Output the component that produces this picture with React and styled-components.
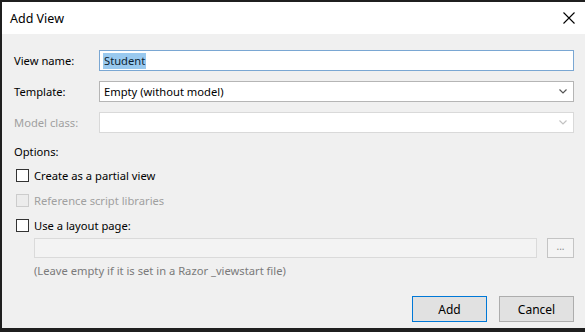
import React from 'react'
import styled, { createGlobalStyle } from 'styled-components'

const FONT = `"Noto Sans", "Segoe UI", "Liberation Sans", sans-serif`

const GlobalStyle = createGlobalStyle`
  html, body {
    margin: 0;
    padding: 0;
    background: #1c1c1c;
  }
  body {
    font-family: ${FONT};
    font-size: 11.2px;
  }
`

const Screen = styled.div`
  width: 585px;
  height: 332px;
  box-sizing: border-box;
  padding: 2px 0 4px 2px;
  display: flex;
  background: #1f1f1f;
`

const Dialog = styled.div`
  flex: 1;
  display: flex;
  flex-direction: column;
  background: #f0f0f0;
  font-family: ${FONT};
  font-size: 11.2px;
  color: #000;
`

const TitleBar = styled.div`
  height: 32px;
  flex: none;
  display: flex;
  align-items: center;
  justify-content: space-between;
  background: #fff;
  padding: 0 9px 0 8px;
`

const Title = styled.span`
  font-size: 12.5px;
  color: #000;
`

const CloseButton = styled.button`
  width: 14px;
  height: 14px;
  padding: 0;
  border: 0;
  background: transparent;
  display: flex;
  align-items: center;
  justify-content: center;
`

const Body = styled.div`
  flex: 1;
  display: flex;
  flex-direction: column;
  padding: 16px 11px 6px 12px;
`

const FieldGrid = styled.div`
  display: grid;
  grid-template-columns: 85px 1fr;
  row-gap: 10px;
  align-items: center;
`

const Label = styled.label`
  color: ${p => (p.$disabled ? '#a0a0a0' : '#000')};
  line-height: 16px;
`

const TextBox = styled.div`
  height: 21px;
  box-sizing: border-box;
  border: 1px solid ${p => (p.$focused ? '#7aa7d3' : '#c9c9c9')};
  background: #fff;
  display: flex;
  align-items: center;
  padding: 0 3px;
`

const Selected = styled.span`
  background: #99c9ef;
  color: #0c1f33;
  line-height: 16px;
  padding: 0 1px;
`

const Select = styled.div`
  height: 21px;
  box-sizing: border-box;
  border: 1px solid ${p => (p.$disabled ? '#d9d9d9' : '#b5b5b5')};
  background: #fff;
  display: flex;
  align-items: center;
  justify-content: space-between;
  padding: 0 6px 0 4px;
  color: #000;
`

const Section = styled.div`
  margin: 11px 0 3px;
  line-height: 16px;
`

const CheckRow = styled.label`
  display: flex;
  align-items: center;
  gap: 5px;
  height: 25px;
  padding-left: 2px;
  color: ${p => (p.$disabled ? '#a0a0a0' : '#000')};
`

const Box = styled.span`
  width: 13px;
  height: 13px;
  box-sizing: border-box;
  border: 1px solid ${p => (p.$disabled ? '#cccccc' : '#333')};
  background: ${p => (p.$disabled ? '#ececec' : '#fff')};
`

const LayoutRow = styled.div`
  display: flex;
  align-items: center;
  gap: 10px;
  padding-left: 20px;
`

const LayoutInput = styled.div`
  flex: 1;
  height: 20px;
  box-sizing: border-box;
  border: 1px solid #dadada;
  background: #f3f3f3;
`

const BrowseButton = styled.button`
  width: 27px;
  height: 20px;
  box-sizing: border-box;
  border: 1px solid #c4c4c4;
  background: #f4f4f4;
  color: #8a8a8a;
  font-family: ${FONT};
  font-size: 10px;
  padding: 0 0 4px;
  line-height: 1;
`

const Hint = styled.div`
  padding-left: 20px;
  margin-top: 5px;
  color: #7a7a7a;
  line-height: 16px;
`

const Buttons = styled.div`
  margin-top: auto;
  display: flex;
  justify-content: flex-end;
  gap: 12px;
`

const Button = styled.button`
  width: 75px;
  height: 26px;
  box-sizing: border-box;
  border: 1px solid ${p => (p.$default ? '#0078d7' : '#adadad')};
  background: #e1e1e1;
  font-family: ${FONT};
  font-size: 12px;
  color: #000;
  padding: 0;
`

function Chevron({ color }) {
  return (
    <svg width="8" height="5" viewBox="0 0 8 5">
      <polyline points="0.5,0.5 4,4 7.5,0.5" fill="none" stroke={color} strokeWidth="1.2" />
    </svg>
  )
}

export default function App() {
  return (
    <>
      <GlobalStyle />
      <Screen>
        <Dialog>
          <TitleBar>
            <Title>Add View</Title>
            <CloseButton aria-label="Close">
              <svg width="12" height="12" viewBox="0 0 12 12">
                <path d="M0.5 0.5 L11.5 11.5 M11.5 0.5 L0.5 11.5" stroke="#000" strokeWidth="1.1" />
              </svg>
            </CloseButton>
          </TitleBar>
          <Body>
            <FieldGrid>
              <Label>View name:</Label>
              <TextBox $focused>
                <Selected>Student</Selected>
              </TextBox>
              <Label>Template:</Label>
              <Select>
                <span>Empty (without model)</span>
                <Chevron color="#555" />
              </Select>
              <Label $disabled>Model class:</Label>
              <Select $disabled>
                <span />
                <Chevron color="#c2c2c2" />
              </Select>
            </FieldGrid>
            <Section>Options:</Section>
            <CheckRow>
              <Box />
              Create as a partial view
            </CheckRow>
            <CheckRow $disabled>
              <Box $disabled />
              Reference script libraries
            </CheckRow>
            <CheckRow>
              <Box />
              Use a layout page:
            </CheckRow>
            <LayoutRow>
              <LayoutInput />
              <BrowseButton>...</BrowseButton>
            </LayoutRow>
            <Hint>(Leave empty if it is set in a Razor _viewstart file)</Hint>
            <Buttons>
              <Button $default>Add</Button>
              <Button>Cancel</Button>
            </Buttons>
          </Body>
        </Dialog>
      </Screen>
    </>
  )
}
